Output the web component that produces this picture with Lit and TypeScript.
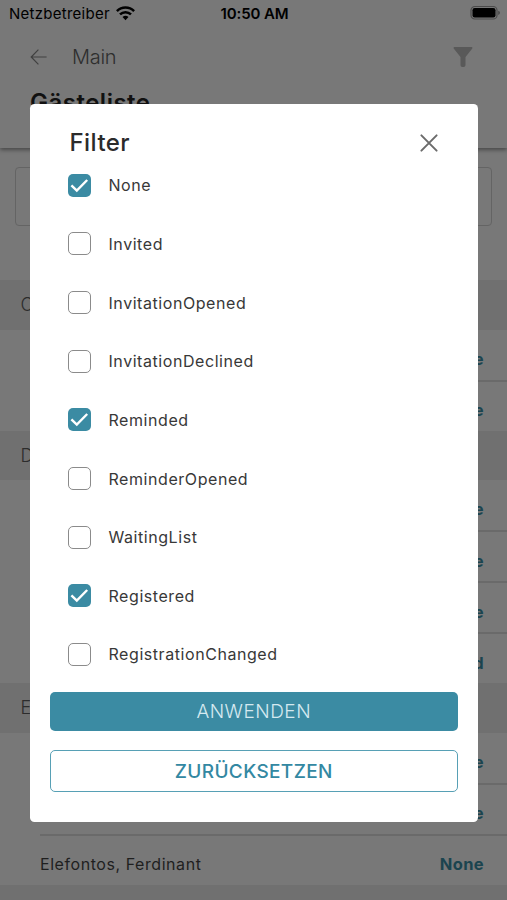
import { LitElement, html, css } from "lit";
import { customElement, property, state } from "lit/decorators.js";
import { classMap } from "lit/directives/class-map.js";

interface Guest { name: string; status: string; }
interface Group { letter: string; guests: Guest[]; }

const GROUPS: Group[] = [
  { letter: "C", guests: [{ name: "", status: "None" }, { name: "", status: "None" }] },
  {
    letter: "D",
    guests: [
      { name: "", status: "None" },
      { name: "", status: "None" },
      { name: "", status: "None" },
      { name: "", status: "Invited" },
    ],
  },
  {
    letter: "E",
    guests: [
      { name: "", status: "None" },
      { name: "", status: "None" },
      { name: "Elefontos, Ferdinant", status: "None" },
    ],
  },
];

const OPTIONS = [
  "None", "Invited", "InvitationOpened", "InvitationDeclined", "Reminded",
  "ReminderOpened", "WaitingList", "Registered", "RegistrationChanged",
];

@customElement("status-bar")
class StatusBar extends LitElement {
  static styles = css`
    :host { display: grid; grid-template-columns: 1fr auto 1fr; align-items: center; height: 27px; padding: 0 7px 1px 9px; color: #000; }
    .carrier { display: flex; align-items: center; gap: 6px; font-size: 15px; letter-spacing: 0.26px; }
    .time { font-size: 15px; font-weight: 600; letter-spacing: -0.1px; }
    .battery { justify-self: end; }
    svg { display: block; margin-top: -1px; }
  `;
  render() {
    return html`
      <div class="carrier"><span>Netzbetreiber</span>
        <svg width="19" height="15" viewBox="0 0 19 15">
          <path d="M.9 5.1a12.3 12.3 0 0 1 17.2 0" fill="none" stroke="#000" stroke-width="2.5"/>
          <path d="M4 8.4a7.8 7.8 0 0 1 11 0" fill="none" stroke="#000" stroke-width="2.5"/>
          <path d="M9.5 14.2 6.5 11.1a4.3 4.3 0 0 1 6 0z"/>
        </svg>
      </div>
      <div class="time">10:50 AM</div>
      <svg class="battery" width="30" height="16" viewBox="0 0 30 16">
        <rect x="1" y="1.5" width="26" height="12.5" rx="3.8" fill="none" stroke="#4b4b4b" stroke-width="1.2"/>
        <rect x="2.5" y="3" width="23" height="9.5" rx="2.2"/>
        <path d="M28.2 5.7q1.8.6 1.8 2.1t-1.8 2.1z" fill="#4b4b4b"/>
      </svg>`;
  }
}

@customElement("guest-group")
class GuestGroup extends LitElement {
  @property({ attribute: false }) group!: Group;
  static styles = css`
    :host { display: block; }
    .letter { height: 49.5px; padding-left: 20.5px; background: #707070; color: #2c2c2c; display: flex; align-items: center; font-size: 18px; font-weight: 300; }
    .row { height: 50px; margin-left: 40px; padding: 8px 23px 0 0; box-sizing: border-box; display: flex; justify-content: space-between; align-items: center; font-size: 16px; color: #1f1f1f; letter-spacing: 0.56px; }
    .row + .row { height: 51px; border-top: 2px solid #6a6a6a; }
    .status { color: #1b444f; font-weight: 700; font-size: 16.5px; letter-spacing: 0.35px; }
  `;
  render() {
    return html`<div class="letter">${this.group.letter}</div>
      ${this.group.guests.map((g) => html`<div class="row"><span>${g.name}</span><span class="status">${g.status}</span></div>`)}`;
  }
}

@customElement("filter-dialog")
class FilterDialog extends LitElement {
  @state() selected = new Set(["None", "Reminded", "Registered"]);
  static styles = css`
    :host { display: block; box-sizing: border-box; background: #fff; border-radius: 4.5px; padding: 0 19.5px; }
    header { display: flex; justify-content: space-between; align-items: center; height: 41px; padding: 19px 19px 0 20px; margin-bottom: -7.5px; }
    h2 { margin: 0; font-size: 24px; line-height: 30px; font-weight: 500; color: #2b2b2b; letter-spacing: 0.45px; }
    .option { display: flex; align-items: center; height: 58.65px; gap: 18px; padding-left: 18px; color: #383838; font-size: 16px; letter-spacing: 0.56px; }
    .box { width: 23px; height: 23px; box-sizing: border-box; border: 1.5px solid #8b8b8b; border-radius: 5px; display: block; }
    .box.on { background: #3b8ba3; border: 0; }
    .box svg { display: block; }
    button { display: block; width: 100%; border-radius: 5px; font-family: inherit; font-size: 19px; padding: 0; }
    .apply { height: 39px; border: 0; background: #3b8ba3; color: #d5e9f0; font-weight: 300; margin-top: 8.5px; letter-spacing: 0.5px; }
    .reset { height: 42px; border: 1.5px solid #57a0b5; background: #fff; color: #3388a2; font-weight: 500; margin-top: 19px; letter-spacing: 0.37px; }
    .close { display: block; }
  `;
  toggle(o: string) {
    const next = new Set(this.selected);
    next.has(o) ? next.delete(o) : next.add(o);
    this.selected = next;
  }
  render() {
    return html`
      <header><h2>Filter</h2>
        <svg class="close" width="20" height="20" viewBox="0 0 20 20" fill="none" stroke="#6b6b6b" stroke-width="2" stroke-linecap="round"><path d="M2.4 2.4 17.6 17.6M17.6 2.4 2.4 17.6"/></svg>
      </header>
      <div class="list">
      ${OPTIONS.map((o) => {
        const on = this.selected.has(o);
        return html`<div class="option" @click=${() => this.toggle(o)}>
          <span class=${classMap({ box: true, on })}>${on
            ? html`<svg width="23" height="23" viewBox="0 0 23 23" fill="none" stroke="#fff" stroke-width="2.4"><path d="M3.4 11.3 8.8 16.6 19.2 6"/></svg>`
            : ""}</span><span>${o}</span></div>`;
      })}
      </div>
      <button class="apply">ANWENDEN</button>
      <button class="reset">ZURÜCKSETZEN</button>`;
  }
}

@customElement("app-root")
class AppRoot extends LitElement {
  static styles = css`
    :host { display: block; position: relative; width: 507px; height: 900px; overflow: hidden; background: #787878; font-family: Inter, "Liberation Sans", sans-serif; }
    .top { position: relative; height: 148px; box-sizing: border-box; background: #787878; box-shadow: 0 2px 4px rgba(0, 0, 0, 0.4); }
    .nav { display: flex; align-items: center; height: 58px; padding: 0 34px 0 30px; }
    .nav span { margin-left: 24px; flex: 1; font-size: 20px; font-weight: 300; color: #2e2e2e; letter-spacing: -0.3px; }
    h1 { margin: 1px 0 0 30px; font-size: 24px; line-height: 32px; font-weight: 600; color: #111; letter-spacing: 0.5px; }
    .search { margin: 19px 15px 54px 15px; height: 59px; box-sizing: border-box; border: 1.5px solid #646464; border-radius: 4px; }
    .tail { height: 50px; background: #707070; }
    filter-dialog { position: absolute; left: 30px; top: 103.5px; width: 447.5px; height: 718.5px; }
  `;
  render() {
    return html`
      <div class="top">
        <status-bar></status-bar>
        <div class="nav">
          <svg width="18" height="18" viewBox="0 0 18 18" fill="none" stroke="#404040" stroke-width="1.2"><path d="M16.6 9H1.3M8.4 1.6 1.2 9l7.2 7.4"/></svg>
          <span>Main</span>
          <svg width="20" height="22" viewBox="0 0 20 22" fill="#595959"><path d="M1.4 1h17.2q1.4.2.7 1.5L12.5 11v8.3q-.3 1.5-1.7 1.7H9.2q-1.6-.2-1.7-1.7V11L.7 2.5Q0 1.2 1.4 1z"/></svg>
        </div>
        <h1>Gästeliste</h1>
      </div>
      <div class="search"></div>
      ${GROUPS.map((g) => html`<guest-group .group=${g}></guest-group>`)}
      <div class="tail"></div>
      <filter-dialog></filter-dialog>`;
  }
}
